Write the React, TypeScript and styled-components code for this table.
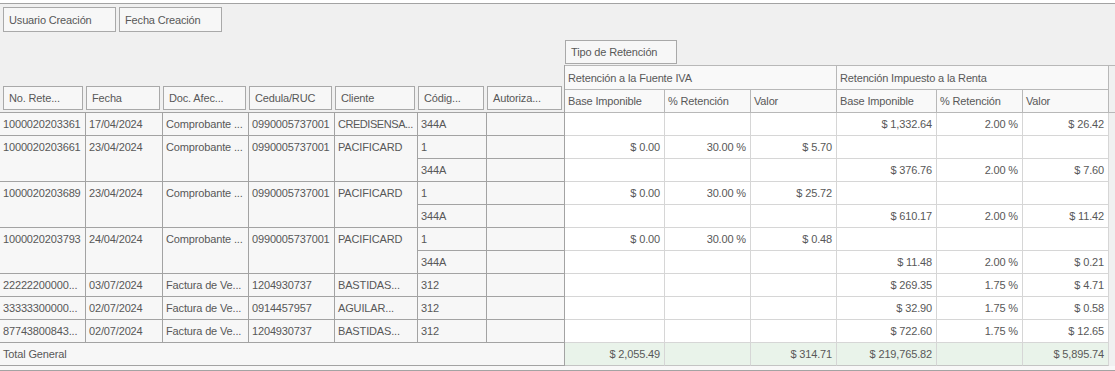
import React from "react";
import styled, { createGlobalStyle } from "styled-components";

const GlobalStyle = createGlobalStyle`
  html, body { margin: 0; padding: 0; background: #ffffff; }
  body {
    font-family: "Liberation Sans", Arial, sans-serif;
    font-size: 11px;
    letter-spacing: -0.15px;
    color: #585858;
  }
  * { box-sizing: border-box; }
`;

const ROW_LINE = "#a3a3a3";
const DATA_LINE = "#d6d6d6";
const HEAD_LINE = "#b8b8b8";

const Page = styled.div`
  padding-top: 3px;
  width: 1115px;
`;

const Pivot = styled.div`
  border-top: 1px solid ${ROW_LINE};
  border-bottom: 1px solid ${ROW_LINE};
  background: #f0f0f0;
`;

const FilterArea = styled.div`
  display: flex;
  gap: 3px;
  padding: 3px 3px 4px;
`;

const FieldButton = styled.div<{ $w?: number; $h?: number; $ml?: number; $mr?: number }>`
  display: flex;
  align-items: center;
  height: ${(p) => p.$h ?? 24}px;
  width: ${(p) => (p.$w ? `${p.$w}px` : "auto")};
  margin-left: ${(p) => p.$ml ?? 0}px;
  margin-right: ${(p) => p.$mr ?? 0}px;
  padding: 0 5px;
  border: 1px solid #a9a9a9;
  background: #f7f7f7;
  white-space: nowrap;
  overflow: hidden;
`;

const Grid = styled.div`
  display: grid;
  grid-template-columns: 86px 77px 86px 86px 83px 69px 78px 100px 86px 86px 100px 86px 86px 6px;
  grid-template-rows: 29px 25px 23px repeat(11, 23px);
`;

const Corner = styled.div`
  grid-column: 1 / span 7;
`;

const ColumnFieldArea = styled.div`
  grid-column: 8 / span 7;
  padding-top: 4px;
`;

const RowFieldArea = styled.div`
  grid-column: 1 / span 7;
  grid-row: span 2;
  display: grid;
  grid-template-columns: 86px 77px 86px 86px 83px 69px 77px;
  align-items: end;
  padding-bottom: 2px;
  border-right: 1px solid ${ROW_LINE};
  border-bottom: 1px solid ${ROW_LINE};
`;

const HeaderCell = styled.div<{ $span?: number; $rows?: number; $top?: boolean; $blank?: boolean }>`
  grid-column: span ${(p) => p.$span ?? 1};
  grid-row: span ${(p) => p.$rows ?? 1};
  display: flex;
  align-items: center;
  padding: 0 3px;
  background: ${(p) => (p.$blank ? "#f0f0f0" : "#f9f9f9")};
  border-top: ${(p) => (p.$top ? `1px solid ${HEAD_LINE}` : "none")};
  border-right: ${(p) => (p.$blank ? "none" : `1px solid ${HEAD_LINE}`)};
  border-bottom: 1px solid ${HEAD_LINE};
  white-space: nowrap;
  overflow: hidden;
`;

const RowCell = styled.div<{ $rows?: number; $span?: number; $tight?: boolean }>`
  grid-row: span ${(p) => p.$rows ?? 1};
  grid-column: span ${(p) => p.$span ?? 1};
  padding: 0 3px;
  line-height: 22px;
  letter-spacing: ${(p) => (p.$tight ? "-0.45px" : "inherit")};
  background: #f7f7f7;
  border-right: 1px solid ${ROW_LINE};
  border-bottom: 1px solid ${ROW_LINE};
  white-space: nowrap;
  overflow: hidden;
`;

const DataCell = styled.div<{ $total?: boolean }>`
  padding: 0 4px 0 3px;
  line-height: 22px;
  text-align: right;
  background: ${(p) => (p.$total ? "#e9f3ea" : "#ffffff")};
  border-right: 1px solid ${DATA_LINE};
  border-bottom: 1px solid ${(p) => (p.$total ? "#c4c4c4" : DATA_LINE)};
  white-space: nowrap;
`;

const ExtraBody = styled.div`
  grid-column: 14;
  grid-row: 4 / 15;
  background: #f0f0f0;
`;

const FooterStrip = styled.div`
  height: 4px;
  background: #f8f8f8;
`;

type Vals = [string, string, string];
type Sub = { code: string; iva?: Vals; renta?: Vals };
type Group = { no: string; fecha: string; doc: string; ruc: string; cliente: string; subs: Sub[] };

const EMPTY: Vals = ["", "", ""];

const groups: Group[] = [
  {
    no: "1000020203361", fecha: "17/04/2024", doc: "Comprobante ...", ruc: "0990005737001", cliente: "CREDISENSA...",
    subs: [{ code: "344A", renta: ["$ 1,332.64", "2.00 %", "$ 26.42"] }],
  },
  {
    no: "1000020203661", fecha: "23/04/2024", doc: "Comprobante ...", ruc: "0990005737001", cliente: "PACIFICARD",
    subs: [
      { code: "1", iva: ["$ 0.00", "30.00 %", "$ 5.70"] },
      { code: "344A", renta: ["$ 376.76", "2.00 %", "$ 7.60"] },
    ],
  },
  {
    no: "1000020203689", fecha: "23/04/2024", doc: "Comprobante ...", ruc: "0990005737001", cliente: "PACIFICARD",
    subs: [
      { code: "1", iva: ["$ 0.00", "30.00 %", "$ 25.72"] },
      { code: "344A", renta: ["$ 610.17", "2.00 %", "$ 11.42"] },
    ],
  },
  {
    no: "1000020203793", fecha: "24/04/2024", doc: "Comprobante ...", ruc: "0990005737001", cliente: "PACIFICARD",
    subs: [
      { code: "1", iva: ["$ 0.00", "30.00 %", "$ 0.48"] },
      { code: "344A", renta: ["$ 11.48", "2.00 %", "$ 0.21"] },
    ],
  },
  {
    no: "22222200000...", fecha: "03/07/2024", doc: "Factura de Ve...", ruc: "1204930737", cliente: "BASTIDAS...",
    subs: [{ code: "312", renta: ["$ 269.35", "1.75 %", "$ 4.71"] }],
  },
  {
    no: "33333300000...", fecha: "02/07/2024", doc: "Factura de Ve...", ruc: "0914457957", cliente: "AGUILAR...",
    subs: [{ code: "312", renta: ["$ 32.90", "1.75 %", "$ 0.58"] }],
  },
  {
    no: "87743800843...", fecha: "02/07/2024", doc: "Factura de Ve...", ruc: "1204930737", cliente: "BASTIDAS...",
    subs: [{ code: "312", renta: ["$ 722.60", "1.75 %", "$ 12.65"] }],
  },
];

const totals = ["$ 2,055.49", "", "$ 314.71", "$ 219,765.82", "", "$ 5,895.74"];

const rowFields: { label: string; ml?: number; mr: number }[] = [
  { label: "No. Rete...", ml: 3, mr: 3 },
  { label: "Fecha", mr: 3 },
  { label: "Doc. Afec...", mr: 3 },
  { label: "Cedula/RUC", mr: 3 },
  { label: "Cliente", mr: 3 },
  { label: "Códig...", mr: 3 },
  { label: "Autoriza...", mr: 2 },
];

const subHeaders = ["Base Imponible", "% Retención", "Valor", "Base Imponible", "% Retención", "Valor"];

export default function App() {
  return (
    <Page>
      <GlobalStyle />
      <Pivot>
        <FilterArea>
          <FieldButton $w={113} $h={25}>Usuario Creación</FieldButton>
          <FieldButton $w={103} $h={25}>Fecha Creación</FieldButton>
        </FilterArea>
        <Grid>
          <Corner />
          <ColumnFieldArea>
            <FieldButton $w={112}>Tipo de Retención</FieldButton>
          </ColumnFieldArea>

          <RowFieldArea>
            {rowFields.map((f) => (
              <FieldButton key={f.label} $ml={f.ml} $mr={f.mr}>
                {f.label}
              </FieldButton>
            ))}
          </RowFieldArea>
          <HeaderCell $span={3} $top>Retención a la Fuente IVA</HeaderCell>
          <HeaderCell $span={3} $top>Retención Impuesto a la Renta</HeaderCell>
          <HeaderCell $rows={2} $top $blank />
          {subHeaders.map((h, i) => (
            <HeaderCell key={i}>{h}</HeaderCell>
          ))}

          <ExtraBody />

          {groups.map((g) => (
            <React.Fragment key={g.no + g.fecha}>
              <RowCell $rows={g.subs.length}>{g.no}</RowCell>
              <RowCell $rows={g.subs.length}>{g.fecha}</RowCell>
              <RowCell $rows={g.subs.length}>{g.doc}</RowCell>
              <RowCell $rows={g.subs.length}>{g.ruc}</RowCell>
              <RowCell $rows={g.subs.length} $tight={g.cliente.length > 12}>
                {g.cliente}
              </RowCell>
              {g.subs.map((s, si) => (
                <React.Fragment key={si}>
                  <RowCell>{s.code}</RowCell>
                  <RowCell />
                  {[...(s.iva ?? EMPTY), ...(s.renta ?? EMPTY)].map((v, vi) => (
                    <DataCell key={vi}>{v}</DataCell>
                  ))}
                </React.Fragment>
              ))}
            </React.Fragment>
          ))}

          <RowCell $span={7}>Total General</RowCell>
          {totals.map((t, i) => (
            <DataCell key={i} $total>
              {t}
            </DataCell>
          ))}
        </Grid>
        <FooterStrip />
      </Pivot>
    </Page>
  );
}
